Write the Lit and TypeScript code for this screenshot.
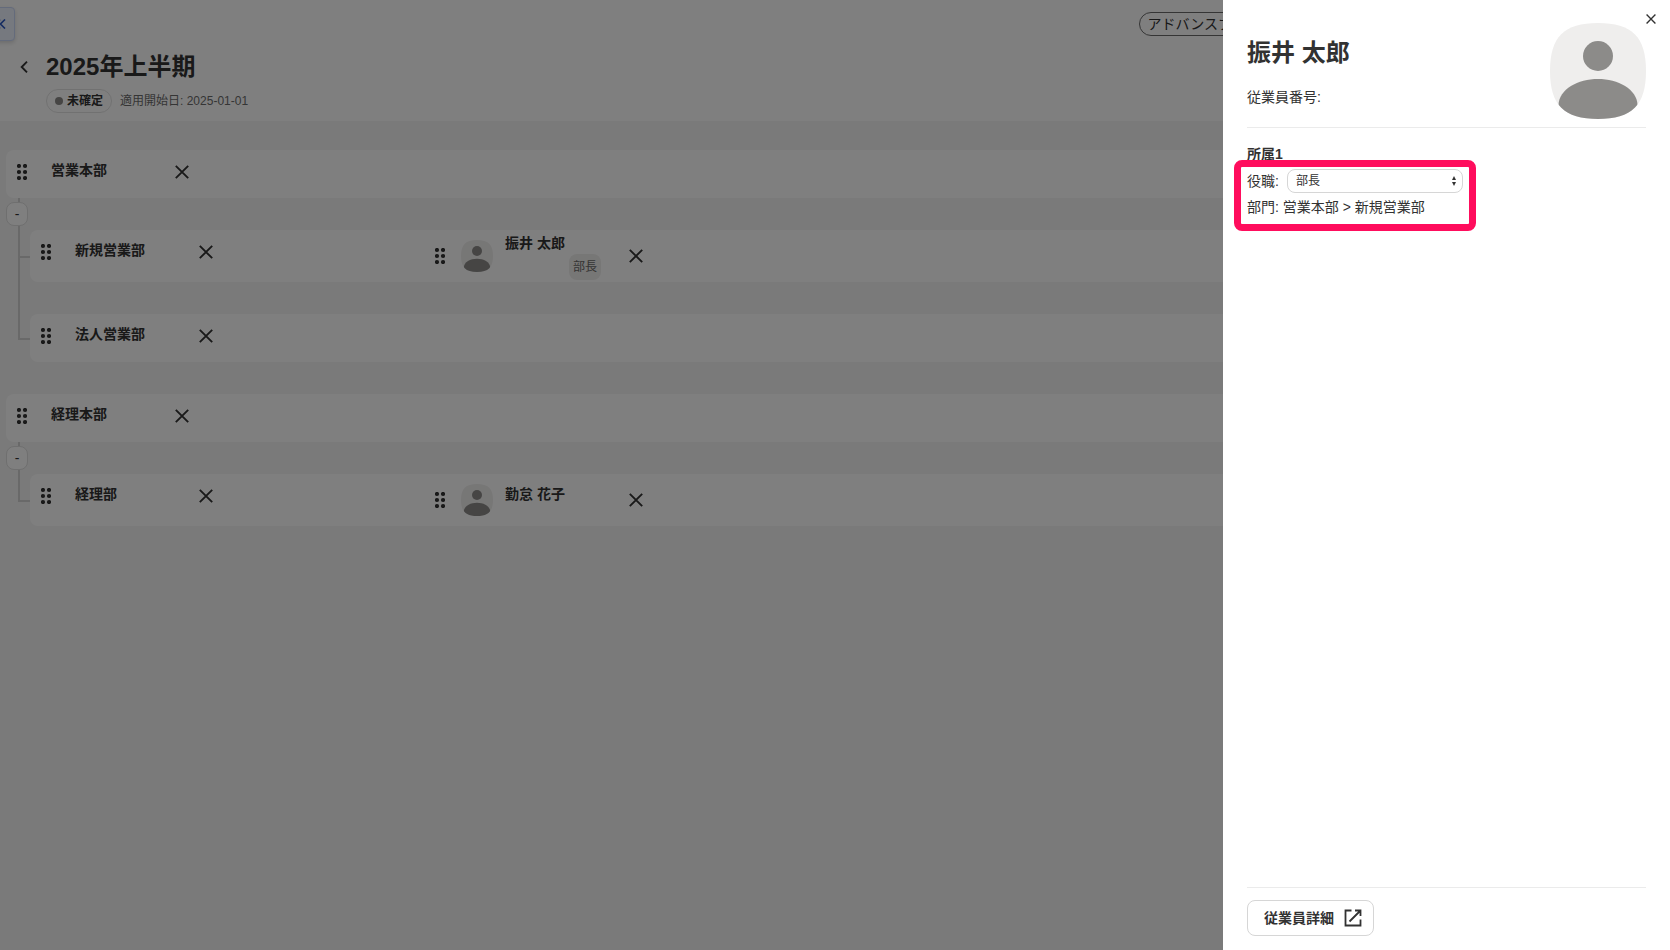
import { LitElement, html, css, svg } from "lit";
import { customElement, property } from "lit/decorators.js";

interface Member {
  name: string;
  role?: string;
}

interface Department {
  name: string;
  member?: Member;
  children?: Department[];
}

const departments: Department[] = [
  {
    name: "営業本部",
    children: [
      { name: "新規営業部", member: { name: "振井 太郎", role: "部長" } },
      { name: "法人営業部" },
    ],
  },
  {
    name: "経理本部",
    children: [{ name: "経理部", member: { name: "勤怠 花子" } }],
  },
];

const closeIcon = (size: number, width: number) => html`
  <svg width=${size} height=${size} viewBox="0 0 14 14" aria-hidden="true">
    <path d="M.8 .8 13.2 13.2M13.2 .8 .8 13.2" fill="none" stroke="currentColor" stroke-width=${width} />
  </svg>
`;

const gripIcon = html`
  <svg width="10" height="16" viewBox="0 0 10 16" aria-hidden="true">
    ${[2, 8, 14].map(
      (y) => svg`<circle cx="2" cy=${y} r="2.1" fill="currentColor" /><circle cx="8" cy=${y} r="2.1" fill="currentColor" />`
    )}
  </svg>
`;

@customElement("user-avatar")
export class UserAvatar extends LitElement {
  static styles = css`
    :host {
      display: block;
      flex: none;
    }
    .image {
      display: block;
    }
  `;

  @property({ type: Number }) size = 32;

  render() {
    return html`
      <svg class="image" width=${this.size} height=${this.size} viewBox="0 0 96 96" role="img" aria-label="プロフィール画像">
        <defs>
          <clipPath id="frame">
            <path d="M48 0C82 0 96 14 96 48S82 96 48 96 0 82 0 48 14 0 48 0Z" />
          </clipPath>
        </defs>
        <g clip-path="url(#frame)">
          <rect width="96" height="96" fill="#efeeed" />
          <circle cx="48" cy="33" r="15" fill="#8c8b89" />
          <path d="M8.500 82C9 66 28 56 48 56S87 66 87.500 82L87 96H9Z" fill="#8c8b89" />
        </g>
      </svg>
    `;
  }
}

@customElement("department-card")
export class DepartmentCard extends LitElement {
  static styles = css`
    :host {
      display: block;
    }
    .card {
      display: flex;
      align-items: flex-start;
      min-height: 48px;
      box-sizing: border-box;
      padding-left: 11px;
      border-radius: 8px;
      background: #fff;
    }
    .unit {
      display: flex;
      align-items: center;
      width: 394px;
      height: 44px;
    }
    .name {
      width: 116px;
      margin-left: 24px;
      padding-bottom: 4px;
      font-weight: 700;
      line-height: 20px;
    }
    .member {
      display: flex;
      align-items: center;
      height: 52px;
    }
    user-avatar {
      margin-left: 16px;
    }
    .person {
      display: flex;
      flex-direction: column;
      width: 96px;
      height: 48px;
      margin-left: 12px;
    }
    .person-name {
      padding: 1px 0;
      font-weight: 700;
      line-height: 20px;
    }
    .person.alone .person-name {
      padding-top: 8px;
    }
    .role {
      align-self: flex-end;
      padding: 0 4px;
      border-radius: 8px;
      background: #efeeed;
      color: #6b6a69;
      font-size: 12px;
      line-height: 26px;
    }
    .icon {
      display: flex;
      padding: 0;
      border: 0;
      background: none;
      color: #323232;
    }
    .remove {
      margin-left: 28px;
    }
    .unit .remove {
      margin-left: 8px;
    }
  `;

  @property({ attribute: false }) department!: Department;

  render() {
    const { name, member } = this.department;
    return html`
      <div class="card">
        <div class="unit">
          <button class="icon" aria-label="${name}を移動">${gripIcon}</button>
          <span class="name">${name}</span>
          <button class="icon remove" aria-label="${name}を削除">${closeIcon(14, 1.9)}</button>
        </div>
        ${member
          ? html`
              <div class="member">
                <button class="icon" aria-label="${member.name}を移動">${gripIcon}</button>
                <user-avatar size="32"></user-avatar>
                <div class="person ${member.role ? "" : "alone"}">
                  <span class="person-name">${member.name}</span>
                  ${member.role ? html`<span class="role">${member.role}</span>` : ""}
                </div>
                <button class="icon remove" aria-label="${member.name}を外す">${closeIcon(14, 1.9)}</button>
              </div>
            `
          : ""}
      </div>
    `;
  }
}

@customElement("employee-drawer")
export class EmployeeDrawer extends LitElement {
  static styles = css`
    :host {
      display: flex;
      flex-direction: column;
      box-sizing: border-box;
      padding: 23px 24px 14px;
      background: #fff;
    }
    .close {
      position: absolute;
      top: 14px;
      right: 14px;
      display: flex;
      padding: 0;
      border: 0;
      background: none;
      color: #323232;
    }
    .profile {
      display: flex;
      justify-content: space-between;
      padding-bottom: 8px;
      border-bottom: 1px solid #ebebeb;
    }
    .title {
      margin: 12px 0 0;
      font-size: 24px;
      line-height: 36px;
    }
    .number {
      margin: 16px 0 0;
      line-height: 20px;
    }
    .affiliation {
      flex: 1;
      padding-top: 16px;
    }
    .heading {
      margin: 0;
      padding-bottom: 2px;
      font-size: 14px;
      line-height: 20px;
    }
    .assignment {
      position: relative;
      width: fit-content;
    }
    .outline {
      position: absolute;
      inset: -6px -13px -11px -13px;
      border: 7px solid #ff0d5d;
      border-radius: 8px;
      pointer-events: none;
    }
    .row {
      display: flex;
      align-items: center;
      gap: 8px;
      padding: 3px 0 1px;
    }
    .picker {
      position: relative;
      display: flex;
      align-items: center;
    }
    .role {
      appearance: none;
      width: 176px;
      height: 24px;
      padding: 0 24px 0 8px;
      border: 1px solid #d6d6d6;
      border-radius: 8px;
      background: #fff;
      color: #323232;
      font: inherit;
      font-size: 12px;
    }
    .arrows {
      position: absolute;
      right: 7px;
      pointer-events: none;
    }
    .path {
      margin: 0;
      line-height: 26px;
    }
    .footer {
      padding-top: 12px;
      border-top: 1px solid #ebebeb;
    }
    .detail {
      display: inline-flex;
      align-items: center;
      gap: 7px;
      height: 36px;
      box-sizing: border-box;
      padding: 0 8px 0 16px;
      border: 1px solid #d6d6d6;
      border-radius: 8px;
      color: #323232;
      font-weight: 700;
      text-decoration: none;
    }
  `;

  render() {
    return html`
      <button class="close" aria-label="閉じる">${closeIcon(10, 1.9)}</button>
      <header class="profile">
        <div>
          <h2 class="title">振井 太郎</h2>
          <p class="number">従業員番号:</p>
        </div>
        <user-avatar size="96"></user-avatar>
      </header>
      <section class="affiliation">
        <h3 class="heading">所属1</h3>
        <div class="assignment">
          <div class="row">
            <label for="role">役職:</label>
            <span class="picker">
              <select id="role" class="role">
                <option>部長</option>
              </select>
              <svg class="arrows" width="4" height="10" viewBox="0 0 4 10" aria-hidden="true">
                <path d="M2 0 4 4H0ZM2 10 4 6H0Z" fill="#323232" />
              </svg>
            </span>
          </div>
          <p class="path">部門: 営業本部 &gt; 新規営業部</p>
          <div class="outline"></div>
        </div>
      </section>
      <footer class="footer">
        <a class="detail" href="#">
          従業員詳細
          <svg width="24" height="24" viewBox="0 0 24 24" aria-hidden="true">
            <path d="M10.500 4.500H4.500V19.500H19.500V13.500M14 4.500H19.500V10M19 5 8.500 15.500" fill="none" stroke="#323232" stroke-width="1.800" />
          </svg>
        </a>
      </footer>
    `;
  }
}

@customElement("app-root")
export class AppRoot extends LitElement {
  static styles = css`
    :host {
      position: relative;
      display: block;
      min-height: 100vh;
      overflow: hidden;
      background: #f5f5f5;
      color: #323232;
      font: 14px/20px "Liberation Sans", "Noto Sans CJK JP", sans-serif;
    }
    .header {
      position: relative;
      box-sizing: border-box;
      padding: 12px 0 8px;
      background: #fff;
    }
    .expand {
      position: absolute;
      top: 7px;
      left: -18px;
      display: flex;
      align-items: center;
      justify-content: flex-end;
      box-sizing: border-box;
      width: 33px;
      height: 34px;
      padding: 0 8px 0 0;
      border: 1px solid #c9d7f7;
      border-radius: 4px;
      background: #edf2ff;
      color: #2b59c3;
      box-shadow: 0 2px 4px rgba(0, 0, 0, 0.15);
    }
    .topbar {
      display: flex;
      justify-content: flex-end;
      padding-right: 401px;
    }
    .plan {
      box-sizing: border-box;
      height: 24px;
      padding: 0 8px;
      border: 1px solid #6b6b6b;
      border-radius: 12px;
      line-height: 22px;
    }
    .heading {
      display: flex;
      align-items: center;
      gap: 18px;
      padding: 13px 0 0 20px;
    }
    .back {
      display: flex;
      padding: 0;
      border: 0;
      background: none;
      color: #323232;
    }
    .title {
      margin: 0;
      font-size: 24px;
      line-height: 36px;
    }
    .meta {
      display: flex;
      align-items: center;
      gap: 8px;
      padding: 4px 0 0 46px;
      color: #6b6b6b;
      font-size: 12px;
    }
    .status {
      display: flex;
      align-items: center;
      gap: 4px;
      height: 24px;
      box-sizing: border-box;
      padding: 0 8px;
      border: 1px solid #e3e3e3;
      border-radius: 12px;
      color: #323232;
      font-weight: 700;
    }
    .dot {
      width: 8px;
      height: 8px;
      border-radius: 50%;
      background: #8c8b89;
    }
    .tree {
      display: flex;
      flex-direction: column;
      gap: 32px;
      padding: 29px 0 32px 6px;
    }
    .children {
      position: relative;
      display: flex;
      flex-direction: column;
      padding-left: 12px;
    }
    .branch {
      position: relative;
      padding: 32px 0 0 12px;
    }
    .line {
      position: absolute;
      top: 0;
      bottom: 0;
      left: 0;
      width: 2px;
      background: #d2d2d2;
    }
    .branch:last-child .line {
      bottom: 22px;
    }
    .elbow {
      position: absolute;
      bottom: 22px;
      left: 0;
      width: 12px;
      height: 2px;
      background: #d2d2d2;
    }
    .branch.tall .elbow,
    .branch.tall:last-child .line {
      bottom: 24px;
    }
    .toggle {
      position: absolute;
      z-index: 1;
      top: 4px;
      left: 0;
      width: 22px;
      height: 24px;
      padding: 0;
      border: 1px solid #dedede;
      border-radius: 8px;
      background: #fff;
      color: #323232;
      font: inherit;
    }
    .overlay {
      position: absolute;
      z-index: 2;
      inset: 0;
      background: rgba(0, 0, 0, 0.5);
    }
    .drawer {
      position: absolute;
      z-index: 3;
      top: 0;
      right: 0;
      bottom: 0;
      width: 447px;
    }
  `;

  render() {
    return html`
      <header class="header">
        <div class="topbar"><span class="plan">アドバンスプラン</span></div>
        <div class="heading">
          <button class="back" aria-label="戻る">
            <svg width="8" height="12" viewBox="0 0 8 12" aria-hidden="true">
              <path d="M7 .7 1.700 6 7 11.300" fill="none" stroke="currentColor" stroke-width="1.900" />
            </svg>
          </button>
          <h1 class="title">2025年上半期</h1>
        </div>
        <div class="meta">
          <span class="status"><span class="dot"></span>未確定</span>
          <span>適用開始日: 2025-01-01</span>
        </div>
        <button class="expand" aria-label="メニューを開く">
          <svg width="12" height="10" viewBox="0 0 12 10" aria-hidden="true">
            <path d="M6 .5 1.500 5 6 9.500M11 .5 6.500 5 11 9.500" fill="none" stroke="currentColor" stroke-width="1.600" />
          </svg>
        </button>
      </header>
      <main class="tree">
        ${departments.map(
          (department) => html`
            <section>
              <department-card .department=${department}></department-card>
              <div class="children">
                <button class="toggle" aria-label="${department.name}を折りたたむ">-</button>
                ${department.children?.map(
                  (child) => html`
                    <div class="branch ${child.member ? "tall" : ""}">
                      <span class="line"></span>
                      <span class="elbow"></span>
                      <department-card .department=${child}></department-card>
                    </div>
                  `
                )}
              </div>
            </section>
          `
        )}
      </main>
      <div class="overlay"></div>
      <employee-drawer class="drawer"></employee-drawer>
    `;
  }
}
